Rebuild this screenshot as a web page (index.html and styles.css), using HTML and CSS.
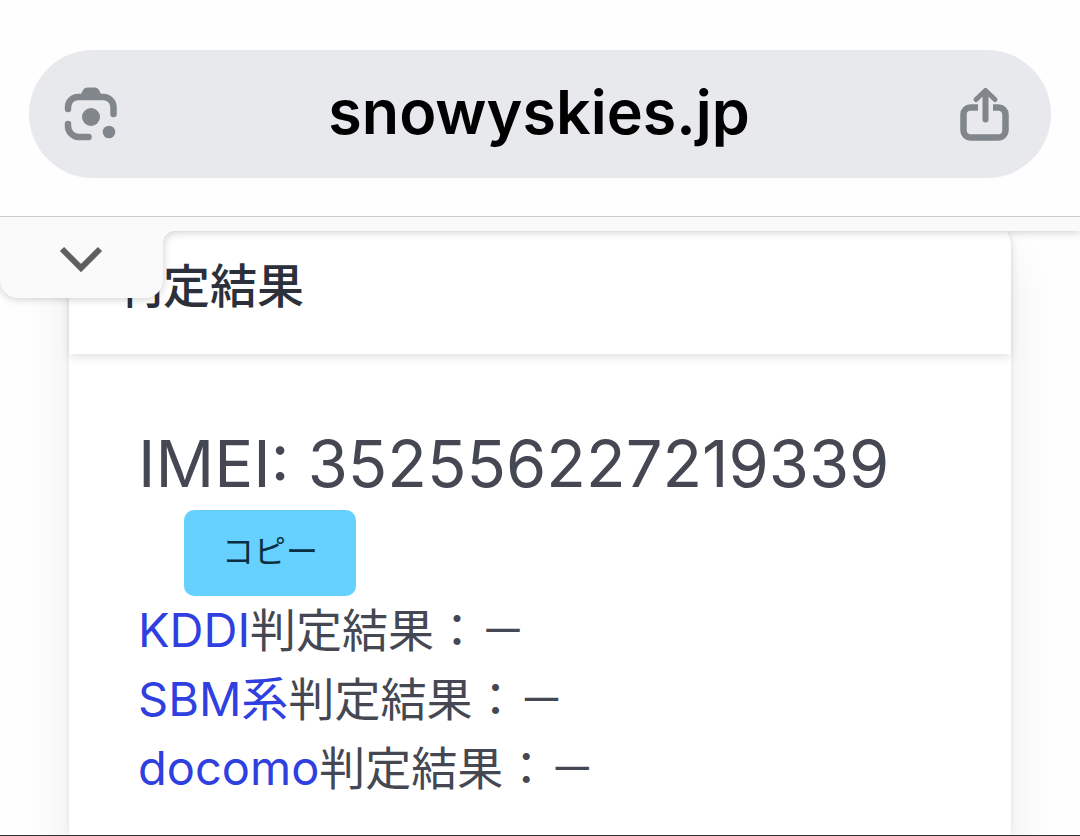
FILE: index.html
```
<!DOCTYPE html>
<html lang="ja">
<head>
  <meta charset="UTF-8">
  <meta name="viewport" content="width=device-width, initial-scale=1.0">
  <title>判定結果</title>
  <link rel="stylesheet" href="styles.css">
</head>
<body>
  <header class="browser-bar">
    <div class="address">
      <button type="button" class="icon-button" aria-label="カメラで検索">
        <svg width="54" height="54" viewBox="0 0 54 54" fill="none" stroke="#80868b" stroke-width="6.500" stroke-linecap="round">
          <path d="M4 22v-2a10 10 0 0 1 10-10h25.500a10 10 0 0 1 10 10v7"/>
          <path d="M4 37v2a11 11 0 0 0 11 11h9.500"/>
          <path d="M14 13l5-10q1.300-2.500 4-2.500h8q2.700 0 4 2.500l5 10z" fill="#80868b" stroke="none"/>
          <circle cx="27" cy="30" r="9" fill="#80868b" stroke="none"/>
          <circle cx="45" cy="45" r="6.300" fill="#80868b" stroke="none"/>
        </svg>
      </button>
      <input type="text" class="url" value="snowyskies.jp" aria-label="アドレス">
      <button type="button" class="icon-button" aria-label="共有">
        <svg width="54" height="54" viewBox="0 0 54 54" fill="none" stroke="#80868b" stroke-width="6.500">
          <path d="M18 20.500h-7.500a7 7 0 0 0-7 7v16a7 7 0 0 0 7 7h28a7 7 0 0 0 7-7v-16a7 7 0 0 0-7-7h-5.500"/>
          <path d="M25.500 32.500v-26" stroke-width="6" stroke-linecap="round"/>
          <path d="M16 12.500l9.500-9 9.500 9" stroke-width="5" stroke-linecap="round" stroke-linejoin="round"/>
        </svg>
      </button>
    </div>
  </header>

  <main class="page">
    <div class="ad-bar">
      <button type="button" class="ad-toggle" aria-label="閉じる">
        <svg width="44" height="28" viewBox="0 0 44 28" fill="none" stroke="#5f5f5f" stroke-width="6">
          <path d="M3 3l19 19 19-19"/>
        </svg>
      </button>
    </div>

    <section class="card">
      <h1 class="card-header">判定結果</h1>
      <div class="card-body">
        <p class="imei">IMEI: 352556227219339</p>
        <button type="button" class="copy">コピー</button>
        <ul class="results">
          <li><a href="#kddi">KDDI</a>判定結果：－</li>
          <li><a href="#sbm">SBM系</a>判定結果：－</li>
          <li><a href="#docomo">docomo</a>判定結果：－</li>
        </ul>
      </div>
    </section>
  </main>
</body>
</html>
```

FILE: styles.css
```
* {
  box-sizing: border-box;
}
body {
  margin: 0;
  min-height: 100vh;
  display: flex;
  flex-direction: column;
  font-family: Inter, "Noto Sans CJK JP", sans-serif;
  color: #454852;
  background-color: #fefefe;
  border-bottom: 1px solid #333;
}
button {
  border: none;
  font-family: inherit;
  cursor: pointer;
}

/* ブラウザのアドレスバー */
.browser-bar {
  padding: 50px 29px 38px;
  border-bottom: 1px solid #ccc;
}
.address {
  display: flex;
  align-items: center;
  height: 128px;
  padding: 0 37px 0 35px;
  border-radius: 64px;
  background-color: #e8e9ed;
}
.icon-button {
  display: flex;
  padding: 0;
  background: none;
}
.url {
  flex: 1;
  min-width: 0;
  padding: 0 0 4px;
  border: none;
  background: none;
  color: #000;
  font-family: Inter, sans-serif;
  font-size: 61px;
  font-weight: 600;
  line-height: 80px;
  text-align: center;
}

.page {
  flex: 1;
  display: flex;
  flex-direction: column;
  position: relative;
  overflow: hidden;
}

/* ページの上に重なる広告バー */
.ad-bar {
  position: absolute;
  z-index: 1;
  top: 0;
  left: 0;
  right: 0;
  height: 14px;
  background-color: #fafafa;
  filter: drop-shadow(0 1px 4px rgba(0, 0, 0, 0.2));
}
.ad-toggle {
  position: absolute;
  top: 0;
  left: 0;
  width: 163px;
  height: 81px;
  padding: 8px 2px 0 0;
  border-radius: 0 0 18px 18px;
  background-color: #fafafa;
}
.ad-toggle::after {
  content: "";
  position: absolute;
  top: 14px;
  left: 100%;
  width: 12px;
  height: 12px;
  background: radial-gradient(circle at 100% 100%, transparent 12px, #fafafa 12px);
}

.card {
  flex: 1;
  margin: 4px 69px 0;
  border-radius: 24px 24px 0 0;
  background-color: #fff;
  box-shadow: 0 0 4px rgba(0, 0, 0, 0.08), 0 32px 48px rgba(0, 0, 0, 0.08);
}
.card-header {
  margin: 0;
  padding: 30px 47px 33px;
  border-radius: 24px 24px 0 0;
  box-shadow: 0 4px 10px rgba(0, 0, 0, 0.1);
  color: #2c303b;
  font-size: 47px;
  font-weight: 500;
  line-height: 70px;
}
.card-body {
  padding: 64px 69px 24px;
}
.imei {
  margin: 0;
  font-size: 65px;
  line-height: 92px;
}
.copy {
  display: block;
  height: 86px;
  margin-left: 46px;
  padding: 0 38px 8px;
  border-radius: 10px;
  background-color: #66d1ff;
  color: #0b2e40;
  font-size: 32px;
}
.results {
  margin: 0;
  padding: 0;
  list-style: none;
  font-size: 46px;
  line-height: 69px;
}
.results a {
  color: #2f3fe0;
  font-size: 47px;
  line-height: 47px;
  text-decoration: none;
}
```
